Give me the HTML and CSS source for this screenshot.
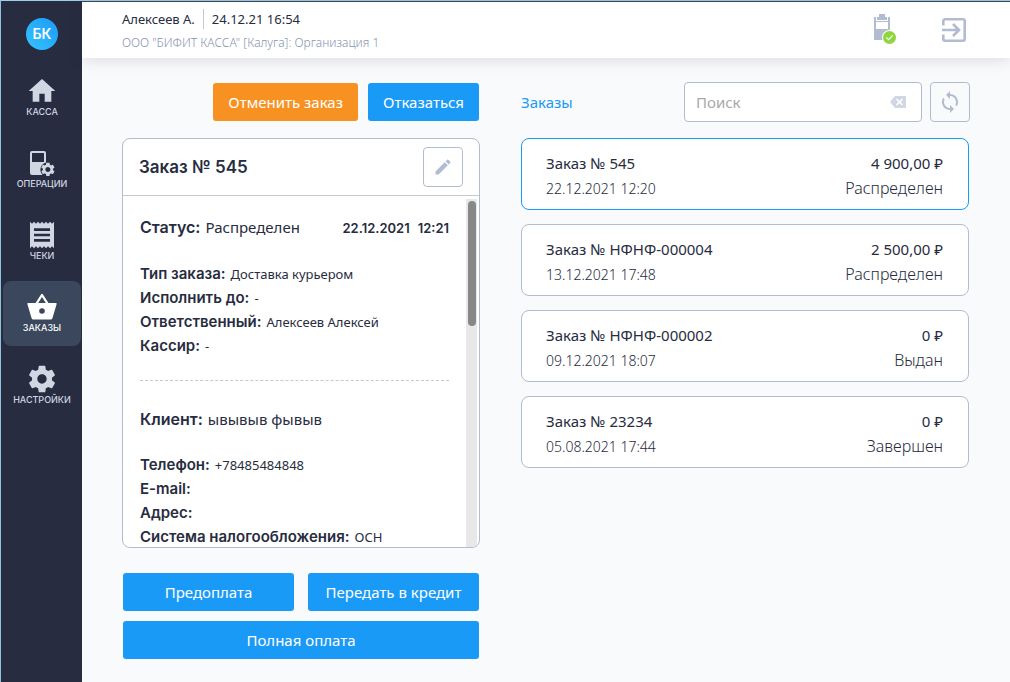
FILE: index.html
```html
<!doctype html>
<html lang="ru">
<head>
    <meta charset="utf-8">
    <meta name="viewport" content="width=device-width, initial-scale=1">
    <title>Заказы</title>
    <link rel="stylesheet" href="styles.css">
</head>
<body>
<div class="app">
    <!-- Боковое меню -->
    <nav class="sidebar">
        <div class="logo">БК</div>
        <a class="nav-item" href="#kassa">
            <svg viewBox="0 0 24 24"><path d="M10 20v-6h4v6h5v-8h3L12 3 2 12h3v8z"/></svg>
            <span>КАССА</span>
        </a>
        <a class="nav-item" href="#operations">
            <svg viewBox="0 0 32 32">
                <path fill-rule="evenodd" d="M6 4h12a2 2 0 0 1 2 2v9.500a7.500 7.500 0 0 0-3.500 12.500H6a2 2 0 0 1-2-2V6a2 2 0 0 1 2-2zm0 2v9h12V6z"/>
                <path transform="translate(13.500 14) scale(.7)" d="M19.140 12.940c.04-.3.060-.61.060-.94 0-.32-.02-.64-.07-.94l2.030-1.580c.18-.14.230-.41.120-.61l-1.920-3.320c-.12-.22-.37-.29-.59-.22l-2.390.96c-.5-.38-1.030-.7-1.620-.94l-.36-2.540c-.04-.24-.24-.41-.48-.41h-3.840c-.24 0-.43.170-.47.410l-.36 2.540c-.59.240-1.130.570-1.620.940l-2.390-.96c-.22-.08-.47 0-.59.220L2.740 8.870c-.12.210-.08.470.120.610l2.030 1.580c-.05.300-.09.630-.09.940s.020.640.070.940l-2.030 1.580c-.18.140-.23.410-.12.610l1.920 3.320c.12.220.37.290.59.220l2.390-.96c.5.380 1.030.7 1.620.94l.36 2.540c.05.240.24.410.48.410h3.840c.24 0 .44-.17.470-.41l.36-2.540c.59-.24 1.130-.56 1.620-.94l2.390.96c.22.080.47 0 .59-.22l1.920-3.320c.12-.22.070-.47-.12-.61l-2.010-1.580zM12 15.600c-1.980 0-3.600-1.620-3.600-3.600s1.620-3.600 3.600-3.600 3.600 1.620 3.600 3.600-1.620 3.600-3.600 3.600z"/>
            </svg>
            <span>ОПЕРАЦИИ</span>
        </a>
        <a class="nav-item" href="#receipts">
            <svg viewBox="0 0 24 24"><path d="M18 17H6v-2h12v2zm0-4H6v-2h12v2zm0-4H6V7h12v2zM3 22l1.500-1.500L6 22l1.500-1.500L9 22l1.500-1.500L12 22l1.500-1.500L15 22l1.500-1.500L18 22l1.500-1.500L21 22V2l-1.500 1.500L18 2l-1.500 1.500L15 2l-1.500 1.500L12 2l-1.500 1.500L9 2 7.500 3.500 6 2 4.500 3.500 3 2v20z"/></svg>
            <span>ЧЕКИ</span>
        </a>
        <a class="nav-item active" href="#orders">
            <svg viewBox="0 0 32 32"><path fill-rule="evenodd" d="M15 3.500a1.200 1.200 0 0 1 2 0L22.500 12H29.500a1 1 0 0 1 1 1.400L26.500 27a2 2 0 0 1-2 1.500H7.500a2 2 0 0 1-2-1.500L1.500 13.400a1 1 0 0 1 1-1.400H9.500zM16 6l-3.800 6h7.600zM16 17.200a2.800 2.800 0 1 0 0 5.600 2.800 2.800 0 0 0 0-5.600z"/></svg>
            <span>ЗАКАЗЫ</span>
        </a>
        <a class="nav-item" href="#settings">
            <svg viewBox="0 0 24 24"><path d="M19.430 12.980c.04-.32.070-.64.070-.98s-.03-.66-.07-.98l2.110-1.650c.19-.15.240-.42.120-.64l-2-3.460c-.12-.22-.39-.3-.61-.22l-2.490 1c-.52-.4-1.080-.73-1.690-.98l-.38-2.650C14.460 2.180 14.250 2 14 2h-4c-.25 0-.46.180-.49.420l-.38 2.650c-.61.250-1.170.590-1.690.980l-2.490-1c-.23-.09-.49 0-.61.220l-2 3.460c-.13.220-.07.490.120.640l2.110 1.650c-.04.320-.07.650-.07.980s.030.660.070.980l-2.110 1.650c-.19.150-.24.420-.12.640l2 3.460c.12.220.39.3.61.220l2.490-1c.52.400 1.080.730 1.690.980l.38 2.650c.03.240.24.420.49.420h4c.25 0 .46-.18.490-.42l.38-2.650c.61-.25 1.170-.59 1.690-.98l2.490 1c.23.090.49 0 .61-.22l2-3.460c.12-.22.070-.49-.12-.64l-2.110-1.650zM12 15.500c-1.930 0-3.500-1.570-3.500-3.500s1.570-3.500 3.500-3.500 3.500 1.570 3.500 3.500-1.570 3.500-3.500 3.500z"/></svg>
            <span>НАСТРОЙКИ</span>
        </a>
    </nav>

    <div class="page">
        <!-- Шапка -->
        <header class="header">
            <div class="user">
                <div class="user-line">
                    <span class="user-name">Алексеев А.</span>
                    <span>24.12.21 16:54</span>
                </div>
                <div class="company">ООО "БИФИТ КАССА" [Калуга]: Организация 1</div>
            </div>
            <button class="header-button" type="button" aria-label="Состояние кассы">
                <svg viewBox="0 0 32 32">
                    <path fill="#b1bbd1" d="M11 0h6v3h2v3H9V3h2zM6 3h2v4h12V3h2v23H6zM8 8v7h12V8z" fill-rule="evenodd"/>
                    <circle cx="21.500" cy="23.500" r="7.500" fill="#fff"/>
                    <circle cx="21.500" cy="23.500" r="6.500" fill="#8fd63c"/>
                    <path d="M18.500 23.500l2.200 2.200 4-4.400" fill="none" stroke="#fff" stroke-width="1.200"/>
                </svg>
            </button>
            <button class="header-button" type="button" aria-label="Выход">
                <svg viewBox="0 0 32 32">
                    <path fill="none" stroke="#b1bbd1" stroke-width="2.600" d="M5.300 11.500V7a1.700 1.700 0 0 1 1.700-1.700h18A1.700 1.700 0 0 1 26.700 7v18a1.700 1.700 0 0 1-1.700 1.700H7A1.700 1.700 0 0 1 5.300 25v-4.500M4 16h16M15 10l6 6-6 6"/>
                </svg>
            </button>
        </header>

        <main class="content">
            <!-- Выбранный заказ -->
            <section class="order">
                <div class="order-actions">
                    <button class="button button-orange" type="button">Отменить заказ</button>
                    <button class="button" type="button">Отказаться</button>
                </div>

                <div class="card">
                    <div class="card-header">
                        <h1 class="card-title">Заказ № 545</h1>
                        <button class="icon-button" type="button" aria-label="Редактировать">
                            <svg viewBox="0 0 24 24"><path d="M3 17.250V21h3.750L17.810 9.940l-3.750-3.750L3 17.250zM20.710 7.040c.39-.39.390-1.020 0-1.410l-2.340-2.340c-.39-.39-1.020-.39-1.410 0l-1.830 1.830 3.750 3.750 1.830-1.830z"/></svg>
                        </button>
                    </div>
                    <div class="card-body">
                        <div class="details">
                            <div class="details-title">
                                <b>Статус:</b>
                                <span>Распределен</span>
                                <time class="details-date"><span>22.12.2021</span><span>12:21</span></time>
                            </div>
                            <dl class="fields">
                                <div><dt>Тип заказа:</dt><dd>Доставка курьером</dd></div>
                                <div><dt>Исполнить до:</dt><dd>-</dd></div>
                                <div><dt>Ответственный:</dt><dd>Алексеев Алексей</dd></div>
                                <div><dt>Кассир:</dt><dd>-</dd></div>
                            </dl>
                            <div class="divider"></div>
                            <div class="details-title">
                                <b>Клиент:</b>
                                <span>ывывыв фывыв</span>
                            </div>
                            <dl class="fields">
                                <div><dt>Телефон:</dt><dd>+78485484848</dd></div>
                                <div><dt>E-mail:</dt><dd></dd></div>
                                <div><dt>Адрес:</dt><dd></dd></div>
                                <div><dt>Система налогообложения:</dt><dd>ОСН</dd></div>
                            </dl>
                        </div>
                        <div class="scrollbar"><div class="scrollbar-thumb"></div></div>
                    </div>
                </div>

                <div class="payments">
                    <button class="button" type="button">Предоплата</button>
                    <button class="button" type="button">Передать в кредит</button>
                    <button class="button button-wide" type="button">Полная оплата</button>
                </div>
            </section>

            <!-- Список заказов -->
            <section class="orders">
                <div class="orders-header">
                    <h2 class="orders-title">Заказы</h2>
                    <div class="search">
                        <input type="text" placeholder="Поиск" aria-label="Поиск">
                        <button type="button" aria-label="Очистить">
                            <svg viewBox="0 0 16 12"><path fill="#d0d6e2" d="M5 0h10a1 1 0 0 1 1 1v10a1 1 0 0 1-1 1H5L0 6z"/><path d="M6.500 3l6 6M12.500 3l-6 6" stroke="#fff" stroke-width="1.600"/></svg>
                        </button>
                    </div>
                    <button class="icon-button refresh" type="button" aria-label="Обновить">
                        <svg viewBox="0 0 24 24"><path d="M12 4V1L8 5l4 4V6c3.310 0 6 2.690 6 6 0 1.010-.25 1.970-.7 2.800l1.460 1.460C19.540 15.030 20 13.570 20 12c0-4.420-3.580-8-8-8zm0 14c-3.310 0-6-2.690-6-6 0-1.010.25-1.970.7-2.800L5.240 7.740C4.460 8.970 4 10.430 4 12c0 4.420 3.580 8 8 8v3l4-4-4-4v3z"/></svg>
                    </button>
                </div>

                <button class="order-row selected" type="button">
                    <span>Заказ № 545</span><span>4 900,00 ₽</span>
                    <span class="order-date">22.12.2021 12:20</span><span class="order-status">Распределен</span>
                </button>
                <button class="order-row" type="button">
                    <span>Заказ № НФНФ-000004</span><span>2 500,00 ₽</span>
                    <span class="order-date">13.12.2021 17:48</span><span class="order-status">Распределен</span>
                </button>
                <button class="order-row" type="button">
                    <span>Заказ № НФНФ-000002</span><span>0 ₽</span>
                    <span class="order-date">09.12.2021 18:07</span><span class="order-status">Выдан</span>
                </button>
                <button class="order-row" type="button">
                    <span>Заказ № 23234</span><span>0 ₽</span>
                    <span class="order-date">05.08.2021 17:44</span><span class="order-status">Завершен</span>
                </button>
            </section>
        </main>
    </div>
</div>
</body>
</html>
```
FILE: styles.css
```css
:root {
    --sidebar-bg: #272c40;
    --sidebar-active: #3b475c;
    --sidebar-text: #d0d6e2;
    --page-bg: #f9fafc;
    --text-color: #272c40;
    --border-color: #b1bbd1;
    --icon-color: #b1bbd1;
    --blue: #1a9af7;
    --orange: #f79222;
}

* {
    box-sizing: border-box;
}

body {
    margin: 0;
    background-color: var(--page-bg);
    color: var(--text-color);
    font-family: "Noto Sans", "Open Sans", sans-serif;
    font-size: 15px;
}

button, input {
    font: inherit;
    color: inherit;
}

button {
    cursor: pointer;
}

svg {
    display: block;
    fill: currentColor;
}

.app {
    display: flex;
    height: 100vh;
    min-height: 600px;
    border-top: 1px solid #a9cbe2;
    border-left: 1px solid #8fc3dc;
}

/* Боковое меню */
.sidebar {
    display: flex;
    flex-direction: column;
    align-items: center;
    flex: none;
    gap: 7px;
    width: 81px;
    padding: 16px 1px 0 2px;
    border-top: 1px solid #1c3347;
    background-color: var(--sidebar-bg);
}

.logo {
    width: 32px;
    height: 32px;
    margin-bottom: 8px;
    border-radius: 50%;
    background: linear-gradient(45deg, #36c3ff, #1a9af7);
    color: #fff;
    font-family: Inter, sans-serif;
    font-size: 14px;
    font-weight: 600;
    line-height: 32px;
    text-align: center;
}

.nav-item {
    display: flex;
    flex-direction: column;
    align-items: center;
    width: 100%;
    padding: 10px 0 13px;
    border-radius: 8px;
    color: var(--sidebar-text);
    font-family: Inter, sans-serif;
    font-size: 9px;
    font-weight: 500;
    line-height: 10px;
    text-decoration: none;
}

.nav-item svg {
    width: 32px;
    height: 32px;
}

.nav-item.active {
    background-color: var(--sidebar-active);
    color: #fff;
}

.page {
    display: flex;
    flex-direction: column;
    flex: 1;
    min-width: 0;
}

/* Шапка */
.header {
    display: flex;
    align-items: center;
    gap: 38px;
    padding: 7px 40px 5px;
    border-top: 1px solid #2f4a5e;
    background-color: #fff;
    box-shadow: 0 2px 14px rgba(39, 44, 64, 0.15);
}

.user {
    flex: 1;
}

.user-line {
    display: flex;
    font-size: 13px;
    line-height: 20px;
}

.user-name {
    margin-right: 8px;
    padding-right: 8px;
    border-right: 1px solid #c4c8d0;
}

.company {
    padding-top: 4px;
    color: #8794b0;
    font-size: 12px;
    font-weight: 300;
    line-height: 20px;
}

.header-button {
    padding: 0 0 2px;
    border: 0;
    background: none;
}

.header-button svg {
    width: 32px;
    height: 32px;
}

.content {
    display: grid;
    grid-template-columns: 356fr 448fr;
    gap: 42px;
    flex: 1;
    min-height: 0;
    padding: 25px 41px 23px;
}

.button {
    height: 38px;
    padding: 0 15px;
    border: 0;
    border-radius: 3px;
    background-color: var(--blue);
    color: #fff;
}

.button-orange {
    background-color: var(--orange);
}

.icon-button {
    display: flex;
    align-items: center;
    justify-content: center;
    flex: none;
    width: 40px;
    height: 40px;
    padding: 0;
    border: 1px solid var(--border-color);
    border-radius: 4px;
    background: none;
    color: var(--icon-color);
}

.icon-button svg {
    width: 20px;
    height: 20px;
}

.refresh svg {
    width: 24px;
    height: 24px;
}

/* Выбранный заказ */
.order {
    display: flex;
    flex-direction: column;
    min-height: 0;
}

.order-actions {
    display: flex;
    justify-content: flex-end;
    gap: 10px;
    margin-bottom: 17px;
}

.card {
    display: flex;
    flex-direction: column;
    flex: 1;
    min-height: 0;
    margin: 0 -1px 25px;
    border: 1px solid var(--border-color);
    border-radius: 8px;
    background-color: #fff;
    overflow: hidden;
}

.card-header {
    display: flex;
    align-items: center;
    justify-content: space-between;
    padding: 8px 16px;
    border-bottom: 1px solid #c4c8d0;
}

.card-title {
    margin: 0;
    font-family: Inter, sans-serif;
    font-size: 17px;
    font-weight: 600;
}

.card-body {
    display: flex;
    flex: 1;
    min-height: 0;
    padding-right: 2px;
}

.details {
    flex: 1;
    padding: 19px 17px 0;
    overflow-y: auto;
    scrollbar-width: none;
}

.details-title {
    display: flex;
    align-items: baseline;
    gap: 5px;
    margin-bottom: 22px;
    line-height: 24px;
}

.details-title b {
    font-family: Inter, sans-serif;
    font-size: 16px;
    font-weight: 600;
}

.details-date {
    display: flex;
    gap: 8px;
    margin-left: auto;
    font-family: Inter, sans-serif;
    font-size: 13px;
    font-weight: 600;
}

.fields {
    margin: 0;
    font-size: 13px;
    line-height: 24px;
}

.fields div {
    display: flex;
    align-items: baseline;
    gap: 5px;
    height: 24px;
}

.fields dt {
    font-family: Inter, sans-serif;
    font-size: 15px;
    font-weight: 600;
}

.fields dd {
    margin: 0;
}

.divider {
    margin: 22px 0 26px;
    border-top: 1px dashed #c4c8d0;
}

.scrollbar {
    width: 11px;
    margin-top: 3px;
    padding: 2px 1px 0 2px;
    background-color: #e8e8e8;
}

.scrollbar-thumb {
    height: 36%;
    border-radius: 4px;
    background-color: #888;
}

.payments {
    display: grid;
    grid-template-columns: 1fr 1fr;
    gap: 10px 14px;
}

.payments .button {
    padding: 0;
}

.button-wide {
    grid-column: span 2;
}

/* Список заказов */
.orders-header {
    display: flex;
    align-items: center;
    gap: 8px;
    margin: -1px -1px 16px 0;
}

.orders-title {
    flex: 1;
    margin: 0;
    color: var(--blue);
    font-size: 15px;
    font-weight: 400;
}

.search {
    display: flex;
    align-items: center;
    width: 238px;
    height: 40px;
    padding: 0 15px 0 11px;
    border: 1px solid var(--border-color);
    border-radius: 4px;
    background-color: #fff;
}

.search input {
    flex: 1;
    min-width: 0;
    padding: 0;
    border: 0;
    outline: 0;
    background: none;
}

.search input::placeholder {
    color: #a9a9a9;
}

.search button {
    padding: 0;
    border: 0;
    background: none;
}

.search svg {
    width: 16px;
    height: 12px;
}

.order-row {
    display: grid;
    grid-template-columns: 1fr auto;
    width: 100%;
    margin-bottom: 14px;
    padding: 12px 25px 8px 24px;
    border: 1px solid var(--border-color);
    border-radius: 8px;
    background-color: #fff;
    line-height: 25px;
    text-align: left;
}

.order-row span:nth-child(even) {
    text-align: right;
}

.order-row.selected {
    border-color: var(--blue);
}

.order-date {
    font-size: 14px;
    font-weight: 300;
}

.order-status {
    font-size: 16px;
    font-weight: 300;
}
```
